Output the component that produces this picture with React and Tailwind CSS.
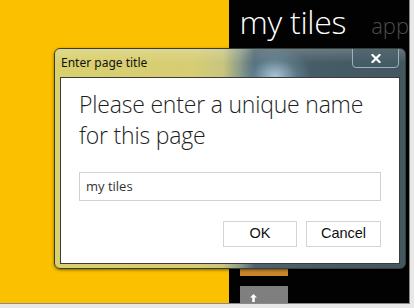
export default function App() {
  return (
    <div className="relative w-[414px] h-[308px] overflow-hidden bg-[#e8e8e8]" style={{ fontFamily: '"Open Sans", sans-serif' }}>
      <div className="flex w-[410px] h-[304px] border-r border-b border-[#8a8a8a]">
        <div className="w-[232px] h-full bg-[#fbc000]" />
        <div className="flex-1 h-full bg-[#020202] flex flex-col pl-[11px]">
          <div className="flex items-baseline gap-[25px] mt-[0px] whitespace-nowrap">
            <span className="text-[32px] leading-[44px] font-light text-white tracking-[-0.3px]">my tiles</span>
            <span className="text-[22px] leading-[30px] font-light text-[#4c4c4c]">app</span>
          </div>
          <div className="flex-1" />
          <div className="w-[48px] h-[7px] bg-[#c8852a]" />
          <div className="h-[10px]" />
          <div className="w-[48px] h-[17px] bg-[#7f7f7f] flex items-end pl-[9px]">
            <svg width="9" height="9" viewBox="0 0 9 9" className="mb-[1px]">
              <path d="M4.5 1 L1 4.5 H3.2 V9 H5.8 V4.5 H8 Z" fill="#fff" />
            </svg>
          </div>
        </div>
      </div>

      <div
        className="absolute left-[54px] top-[48px] w-[352px] h-[221px] rounded-[6px] border border-[#3a3f35] shadow-[0_1px_3px_rgba(0,0,0,0.5)] overflow-hidden"
        style={{
          background:
            'linear-gradient(to right, #d9d06e 0%, #d6cd74 40%, #c9c57f 48%, #8a9a88 53%, #4d6470 57%, #465c66 75%, #42575f 100%)',
        }}
      >
        <div
          className="absolute left-[185px] top-[0px] w-[70px] h-[30px]"
          style={{ background: 'radial-gradient(ellipse at 50% 90%, rgba(200,230,245,0.75) 0%, rgba(120,160,180,0.35) 45%, rgba(0,0,0,0) 75%)' }}
        />
        <div className="absolute inset-x-0 top-0 h-[14px] bg-gradient-to-b from-[rgba(255,255,255,0.18)] to-transparent" />
        <div className="relative flex items-center h-[28px] pl-[6px]">
          <span className="text-[12px] text-[#111]" style={{ fontFamily: '"Noto Sans", sans-serif' }}>Enter page title</span>
        </div>
        <div className="absolute left-[297px] top-[-1px] w-[47px] h-[20px] rounded-b-[4px] border border-[#9fb0b6] bg-[rgba(70,95,105,0.6)] flex items-center justify-center">
          <svg width="10" height="9" viewBox="0 0 10 9">
            <path d="M1.5 1 L8.5 8 M8.5 1 L1.5 8" stroke="#fff" strokeWidth="2.2" strokeLinecap="square" />
          </svg>
        </div>
        <div className="relative ml-[5px] mr-[5px] h-[187px] bg-white border border-[#3b3b3b] flex flex-col pl-[18px] pr-[18px]">
          <div className="mt-[11px] text-[23px] leading-[31px] font-light text-[#1e1e1e] tracking-[-0.2px] whitespace-nowrap">
            Please enter a unique name
            <br />
            for this page
          </div>
          <div className="mt-[21px] h-[29px] border border-[#d2d2d2] flex items-center pl-[6px]">
            <span className="text-[13px] text-[#333] font-normal">my tiles</span>
          </div>
          <div className="mt-[20px] flex justify-end gap-[9px]">
            <div className="w-[74px] h-[26px] border border-[#d4d4d4] flex items-center justify-center text-[14.5px] text-[#111]" style={{ fontFamily: '"Liberation Sans", Arial, sans-serif' }}>OK</div>
            <div className="w-[75px] h-[26px] border border-[#d4d4d4] flex items-center justify-center text-[14.5px] text-[#111]" style={{ fontFamily: '"Liberation Sans", Arial, sans-serif' }}>Cancel</div>
          </div>
        </div>
      </div>
    </div>
  );
}
